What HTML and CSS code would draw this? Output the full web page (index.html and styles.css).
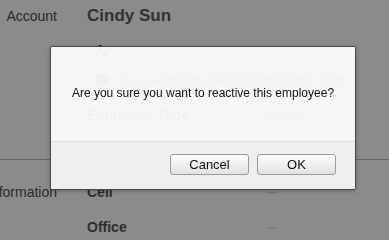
FILE: index.html
```html
<html>
<head>
    <link rel="stylesheet" href="styles.css">
</head>
<body>
    <div class="page">
        <div class="section">
            <div class="label">Account</div>
            <div class="fields">
                <h1 class="name">Cindy Sun</h1>
                <div class="icon-row">
                    <svg class="icon" width="10" height="13" viewBox="0 0 10 13">
                        <path d="M2 1 L4 1 L4.5 4 L3 5 C3.5 7 4.5 8.5 6 9.5 L7.5 8.5 L9.5 10 L9 12 C5 12.5 1 8 1 2 Z" fill="#333"/>
                    </svg>
                    <span class="muted phone">-- --</span>
                </div>
                <div class="icon-row">
                    <svg class="icon" width="13" height="11" viewBox="0 0 13 11">
                        <rect x="0" y="0" width="13" height="11" rx="1" fill="#555"/>
                        <path d="M0.5 1 L6.5 6 L12.5 1" stroke="#888" fill="none"/>
                    </svg>
                    <span class="email">csun+employee@bostonlogic.com</span>
                </div>
                <div class="pair">
                    <span class="key">Employee Type</span>
                    <span class="value">Admin</span>
                </div>
            </div>
        </div>
        <div class="divider"></div>
        <div class="section">
            <div class="label">Contact Information</div>
            <div class="fields">
                <div class="pair">
                    <span class="key">Cell</span>
                    <span class="muted">--</span>
                </div>
                <div class="pair">
                    <span class="key">Office</span>
                    <span class="muted">--</span>
                </div>
            </div>
        </div>
    </div>

    <div class="overlay">
        <div class="dialog">
            <div class="dialog-body">
                <p>Are you sure you want to reactive this employee?</p>
            </div>
            <div class="dialog-footer">
                <button class="btn">Cancel</button>
                <button class="btn">OK</button>
            </div>
        </div>
    </div>
</body>
</html>
```

FILE: styles.css
```css
* {
    box-sizing: border-box;
    margin: 0px;
    padding: 0px;
    font-family: "Liberation Sans", Arial, sans-serif;
}

body {
    background-color: #fff;
    overflow: hidden;
}

.page {
    padding-top: 5px;
}

.section {
    display: flex;
}

.label {
    width: 57px;
    flex-shrink: 0;
    display: flex;
    justify-content: flex-end;
    white-space: nowrap;
    font-size: 14px;
    color: #4e4e4e;
    line-height: 20px;
    margin-top: 1px;
}

.fields {
    margin-left: 30px;
    flex: 1;
}

.name {
    font-size: 17px;
    font-weight: bold;
    color: #5a5a5a;
    line-height: 22px;
    margin-bottom: 14px;
}

.icon-row {
    display: flex;
    align-items: center;
    height: 18px;
    margin-bottom: 11px;
    white-space: nowrap;
}

.icon {
    width: 31px;
    flex-shrink: 0;
}

.muted {
    color: #d2d2d2;
    font-size: 14px;
}

.phone {
    color: #888;
}

.email {
    color: #555;
    font-size: 15px;
}

.pair {
    display: flex;
    align-items: center;
    height: 20px;
    margin-top: 15px;
}

.icon-row + .pair {
    margin-top: 17px;
}

.key {
    width: 180px;
    font-size: 14px;
    font-weight: bold;
    color: #555;
}

.value {
    font-size: 14px;
    color: #888;
}

.divider {
    border-top: 1px solid #bbb;
    margin-top: 34px;
    margin-bottom: 22px;
}

.divider + .section .label {
    margin-top: 0px;
}

.divider + .section .pair:first-child {
    margin-top: 0px;
}

.overlay {
    position: fixed;
    top: 0px;
    left: 0px;
    right: 0px;
    bottom: 0px;
    background-color: rgba(0, 0, 0, 0.455);
}

.dialog {
    position: absolute;
    left: 50px;
    top: 46px;
    width: 306px;
    border: 1px solid #4a4a4a;
    border-radius: 2px;
    overflow: hidden;
    box-shadow: 0 1px 4px rgba(0, 0, 0, 0.3);
}

.dialog-body {
    background-color: rgba(252, 252, 252, 0.95);
    height: 94px;
    padding-top: 39px;
    text-align: center;
}

.dialog-body p {
    font-size: 12px;
    color: #111;
}

.dialog-footer {
    background-color: rgba(243, 243, 243, 0.96);
    border-top: 1px solid #dedede;
    height: 48px;
    display: flex;
    justify-content: flex-end;
    gap: 8px;
    padding-top: 12px;
    padding-right: 19px;
}

.btn {
    width: 79px;
    height: 21px;
    font-size: 13px;
    color: #111;
    background: linear-gradient(#fdfdfd, #e2e2e2);
    border: 1px solid #9a9a9a;
    border-radius: 3px;
}
```
